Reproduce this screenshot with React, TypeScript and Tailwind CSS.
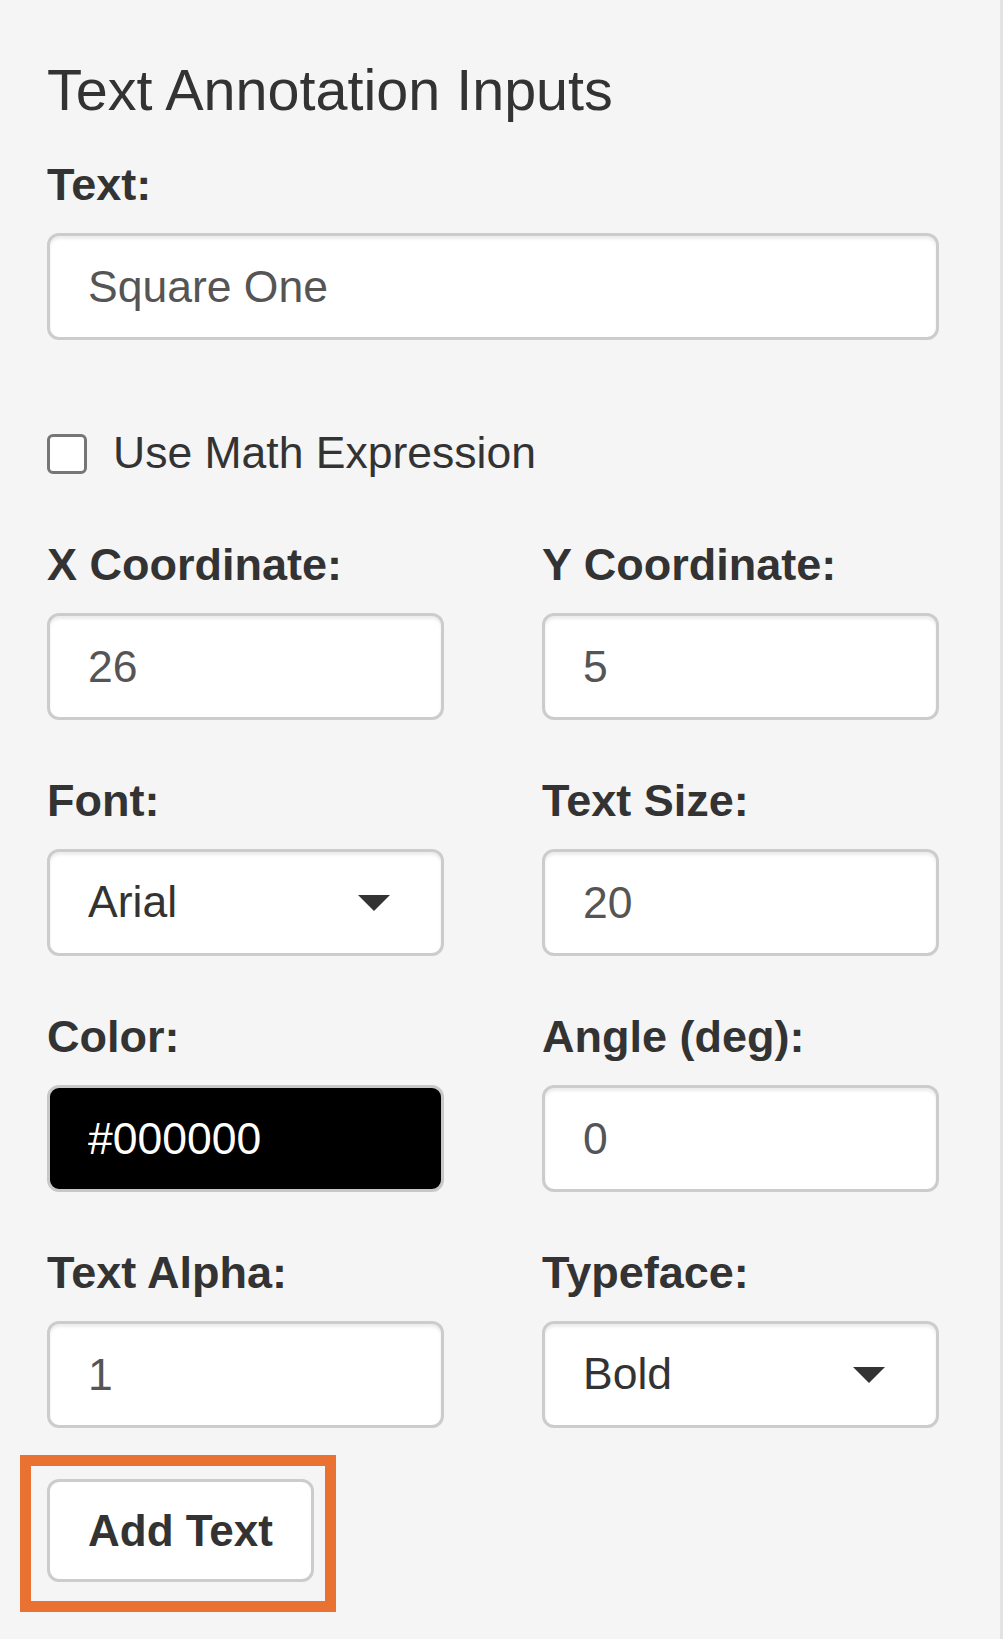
import React from 'react';

const font = { fontFamily: '"Liberation Sans", Arial, Helvetica, sans-serif' };

const boxBase =
  'h-[107px] w-full border-[3px] rounded-[12px] px-[38px] text-[44.5px] outline-none shadow-[inset_0_3px_3px_rgba(0,0,0,0.075)]';

const Label: React.FC<{ children: React.ReactNode }> = ({ children }) => (
  <label className="block font-bold text-[45px] leading-[63px] mb-[17px] text-[#333]">{children}</label>
);

const TextField: React.FC<{ label: string; value: string }> = ({ label, value }) => (
  <div>
    <Label>{label}</Label>
    <input readOnly defaultValue={value} className={`${boxBase} bg-white border-[#ccc] text-[#555]`} />
  </div>
);

const SelectField: React.FC<{ label: string; value: string }> = ({ label, value }) => (
  <div>
    <Label>{label}</Label>
    <div
      className={`${boxBase} bg-white border-[#ccc] text-[#333] flex items-center justify-between pr-[51px]`}
    >
      <span>{value}</span>
      <span className="w-0 h-0 border-l-[16px] border-r-[16px] border-t-[16px] border-l-transparent border-r-transparent border-t-[#333]" />
    </div>
  </div>
);

const ColorField: React.FC<{ label: string; value: string }> = ({ label, value }) => (
  <div>
    <Label>{label}</Label>
    <input readOnly defaultValue={value} className={`${boxBase} bg-black border-[#c8c8c8] text-white`} />
  </div>
);

export default function App() {
  return (
    <div className="min-h-[1639px] bg-white" style={font}>
      <div className="w-[1003px] min-h-[1639px] bg-[#f5f5f5] border-r-[3px] border-[#e3e3e3] pl-[47px] pr-[61px] pt-[59px] pb-[30px]">
        <h4 className="text-[57.5px] leading-[1.1] font-normal text-[#333] m-0">Text Annotation Inputs</h4>

        <div className="mt-[31px]">
          <TextField label="Text:" value="Square One" />
        </div>

        <div className="mt-[82px] flex items-center h-[63px] gap-[26px] text-[44.5px] text-[#333]">
          <input
            type="checkbox"
            className="appearance-none w-[40px] h-[40px] bg-white border-[3px] border-[#767676] rounded-[6px]"
          />
          <span>Use Math Expression</span>
        </div>

        <div className="mt-[48px] grid grid-cols-2 gap-x-[98px] gap-y-[49px]">
          <TextField label="X Coordinate:" value="26" />
          <TextField label="Y Coordinate:" value="5" />
          <SelectField label="Font:" value="Arial" />
          <TextField label="Text Size:" value="20" />
          <ColorField label="Color:" value="#000000" />
          <TextField label="Angle (deg):" value="0" />
          <TextField label="Text Alpha:" value="1" />
          <SelectField label="Typeface:" value="Bold" />
        </div>

        <div className="mt-[51px] relative inline-block">
          <button className="h-[103px] px-[38px] border-[3px] border-[#ccc] rounded-[12px] bg-white font-bold text-[44px] text-[#333]">
            Add Text
          </button>
          <span className="pointer-events-none absolute -left-[27px] -top-[24px] -right-[22px] -bottom-[30px] border-[11px] border-[#e97132]" />
        </div>
      </div>
    </div>
  );
}
